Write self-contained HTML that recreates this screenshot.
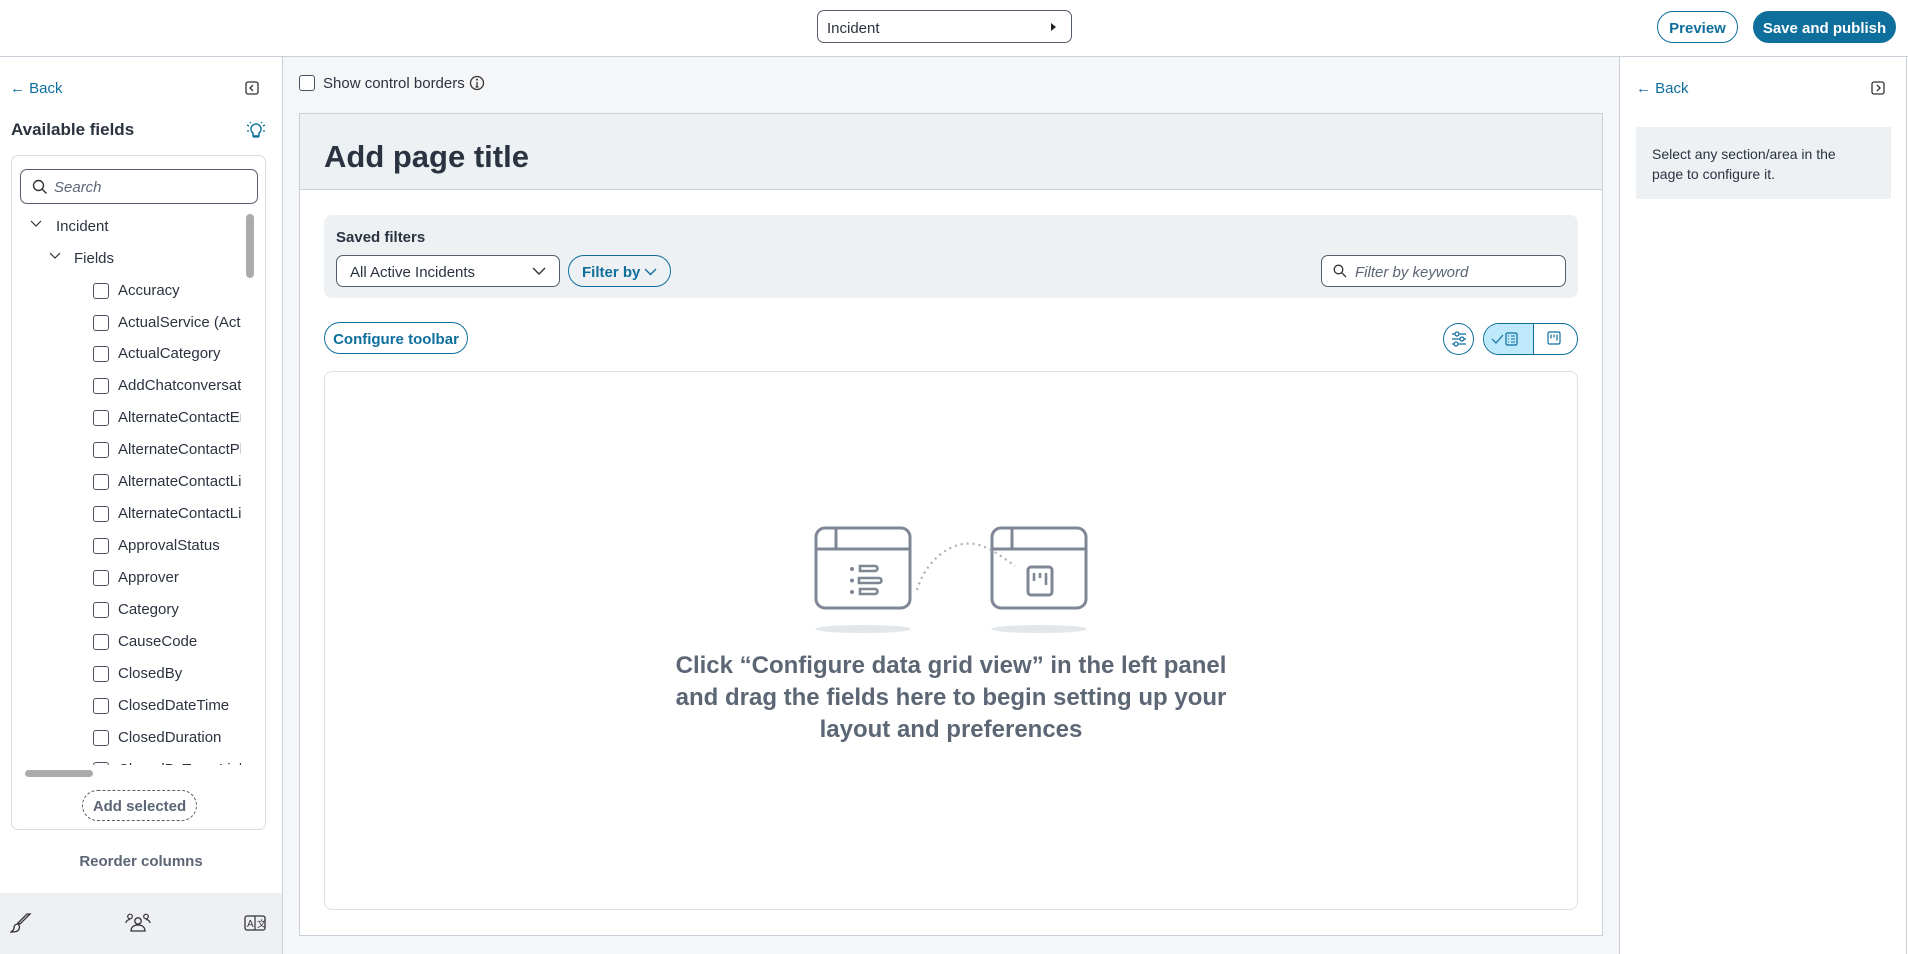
<!DOCTYPE html>
<html><head><meta charset="utf-8"><style>
*{box-sizing:border-box;margin:0;padding:0}
body{width:1908px;height:954px;overflow:hidden;background:#fff;font-family:"Liberation Sans",sans-serif;color:#2b3340;position:relative}
.a{position:absolute}
.blue{color:#0f6f9c}
.cb{position:absolute;width:16px;height:16px;border:1.5px solid #4a5362;border-radius:3px;background:#fff}
.item{position:absolute;left:0;width:240px;height:32px;font-size:15px;white-space:nowrap;overflow:hidden}
.item .cb{left:92px;top:8px}
.item span{position:absolute;left:117px;top:7px;width:123px;overflow:hidden}
.pill{position:absolute;border:1.3px solid #0f6f9c;border-radius:17px;color:#0f6f9c;font-weight:bold;font-size:15px;display:flex;align-items:center;justify-content:center;padding-top:2px}
</style></head><body>
<!-- top bar -->
<div class="a" style="left:0;top:56px;width:1908px;height:1px;background:#c9d0da"></div>
<div class="a" style="left:817px;top:10px;width:255px;height:33px;border:1.3px solid #555e6b;border-radius:7px;font-size:15px;padding:9px 9px">Incident</div>
<svg class="a" style="left:1050px;top:22px" width="8" height="10"><path d="M1 1L6 5L1 9Z" fill="#222"/></svg>
<div class="pill" style="left:1657px;top:11px;width:81px;height:32px">Preview</div>
<div class="pill" style="left:1753px;top:11px;width:143px;height:32px;background:#0f6f9c;color:#fff;border-color:#0f6f9c">Save and publish</div>

<!-- left panel -->
<div class="a" style="left:282px;top:57px;width:1px;height:897px;background:#c9d0da"></div>
<div class="a blue" style="left:10px;top:80px;font-size:15px">&#8592; Back</div>
<svg class="a" style="left:245px;top:81px" width="14" height="14"><rect x="1" y="1" width="12" height="12" rx="2" fill="none" stroke="#333" stroke-width="1.3"/><path d="M8 4L5 7L8 10" fill="none" stroke="#333" stroke-width="1.3"/></svg>
<div class="a" style="left:11px;top:120px;font-size:17px;font-weight:bold">Available fields</div>
<svg class="a" style="left:246px;top:121px" width="20" height="18"><path d="M10 3a5 5 0 0 1 3 9v3h-6v-3a5 5 0 0 1 3-9z" fill="none" stroke="#0f6f9c" stroke-width="1.5"/><path d="M7 16h6M1 4l2 1M19 4l-2 1M1 10h2M17 10h2M4 1l1 1M16 1l-1 1" stroke="#0f6f9c" stroke-width="1.3"/></svg>
<div class="a" style="left:11px;top:155px;width:255px;height:675px;border:1px solid #d8dde4;border-radius:7px;overflow:hidden">
 <div class="a" style="left:8px;top:13px;width:238px;height:35px;border:1.3px solid #555e6b;border-radius:7px;font-size:15px;font-style:italic;color:#5c6675;padding:9px 0 0 33px">Search</div>
 <svg class="a" style="left:20px;top:23px" width="16" height="16"><circle cx="6.5" cy="6.5" r="5" fill="none" stroke="#333" stroke-width="1.4"/><path d="M10 10L14.5 14.5" stroke="#333" stroke-width="1.4"/></svg>
 <div class="a" style="left:234px;top:58px;width:8px;height:64px;border-radius:4px;background:#ababab"></div>
 <svg class="a" style="left:18px;top:64px" width="12" height="8"><path d="M1 1L6 6L11 1" fill="none" stroke="#333" stroke-width="1.2"/></svg>
 <div class="a" style="left:44px;top:62px;font-size:15px">Incident</div>
 <svg class="a" style="left:37px;top:96px" width="12" height="8"><path d="M1 1L6 6L11 1" fill="none" stroke="#333" stroke-width="1.2"/></svg>
 <div class="a" style="left:62px;top:94px;font-size:15px">Fields</div>
 <div class="a" style="left:-11px;top:119px;width:250px;height:490px;overflow:hidden">
  <div class="item" style="top:0"><div class="cb"></div><span>Accuracy</span></div>
  <div class="item" style="top:32px"><div class="cb"></div><span>ActualService (ActualService)</span></div>
  <div class="item" style="top:63px"><div class="cb"></div><span>ActualCategory</span></div>
  <div class="item" style="top:95px"><div class="cb"></div><span>AddChatconversation</span></div>
  <div class="item" style="top:127px"><div class="cb"></div><span>AlternateContactEmail</span></div>
  <div class="item" style="top:159px"><div class="cb"></div><span>AlternateContactPhone</span></div>
  <div class="item" style="top:191px"><div class="cb"></div><span>AlternateContactLink</span></div>
  <div class="item" style="top:223px"><div class="cb"></div><span>AlternateContactLink</span></div>
  <div class="item" style="top:255px"><div class="cb"></div><span>ApprovalStatus</span></div>
  <div class="item" style="top:287px"><div class="cb"></div><span>Approver</span></div>
  <div class="item" style="top:319px"><div class="cb"></div><span>Category</span></div>
  <div class="item" style="top:351px"><div class="cb"></div><span>CauseCode</span></div>
  <div class="item" style="top:383px"><div class="cb"></div><span>ClosedBy</span></div>
  <div class="item" style="top:415px"><div class="cb"></div><span>ClosedDateTime</span></div>
  <div class="item" style="top:447px"><div class="cb"></div><span>ClosedDuration</span></div>
  <div class="item" style="top:479px"><div class="cb"></div><span>ClosedByTeamLinkCat</span></div>
 </div>
 <div class="a" style="left:13px;top:614px;width:68px;height:7px;border-radius:4px;background:#ababab"></div>
 <div class="a" style="left:70px;top:634px;width:115px;height:31px;border:1.2px dashed #555e6b;border-radius:16px;font-size:15px;font-weight:bold;color:#5c6675;display:flex;align-items:center;justify-content:center;padding-top:2px">Add selected</div>
</div>
<div class="a" style="left:0;top:853px;width:282px;text-align:center;font-size:15px;font-weight:bold;color:#5c6675">Reorder columns</div>
<div class="a" style="left:0;top:893px;width:282px;height:61px;background:#eef0f3"></div>
<svg class="a" style="left:10px;top:912px" width="22" height="22"><path d="M20 2L10 12l-2-1 9-9zM8 12c-3 0-4 2-4 4 0 2-2 3-3 4 3 0 7 0 8-3 1-2 0-4-1-5z" fill="none" stroke="#333" stroke-width="1.3"/></svg>
<svg class="a" style="left:125px;top:912px" width="26" height="22"><circle cx="13" cy="9" r="3.2" fill="none" stroke="#333" stroke-width="1.3"/><path d="M6 19c0-4 3-6 7-6s7 2 7 6z" fill="none" stroke="#333" stroke-width="1.3"/><circle cx="5" cy="4.5" r="2.3" fill="none" stroke="#333" stroke-width="1.2"/><circle cx="21" cy="4.5" r="2.3" fill="none" stroke="#333" stroke-width="1.2"/><path d="M1 11c0-2 2-3.5 4-3.5M25 11c0-2-2-3.5-4-3.5" fill="none" stroke="#333" stroke-width="1.2"/></svg>
<svg class="a" style="left:244px;top:915px" width="22" height="16"><rect x="1" y="1" width="20" height="14" rx="2" fill="none" stroke="#333" stroke-width="1.3"/><path d="M11 1v14" stroke="#333" stroke-width="1.2"/><text x="3" y="12" font-size="10" font-family="Liberation Sans" fill="#333">A</text><text x="13" y="12" font-size="9" font-family="Liberation Sans" fill="#333">文</text></svg>

<!-- center -->
<div class="a" style="left:283px;top:57px;width:1336px;height:897px;background:#f5f6f8"></div>
<div class="a" style="left:299px;top:75px;width:16px;height:16px;border:1.5px solid #4a5362;border-radius:3px;background:#fff"></div>
<div class="a" style="left:323px;top:75px;font-size:15px">Show control borders</div>
<svg class="a" style="left:469px;top:75px" width="16" height="16"><circle cx="8" cy="8" r="6.5" fill="none" stroke="#333" stroke-width="1.3"/><path d="M8 7v5M6.5 12h3" stroke="#333" stroke-width="1.3"/><circle cx="8" cy="4.6" r="1" fill="#333"/></svg>
<div class="a" style="left:299px;top:113px;width:1304px;height:823px;border:1px solid #c9d0da;background:#fff"></div>
<div class="a" style="left:300px;top:114px;width:1302px;height:76px;background:#eef1f4;border-bottom:1px solid #c9d0da"></div>
<div class="a" style="left:324px;top:139px;font-size:31px;font-weight:bold;color:#2b3340">Add page title</div>
<div class="a" style="left:324px;top:215px;width:1254px;height:83px;background:#eef1f4;border-radius:8px"></div>
<div class="a" style="left:336px;top:229px;font-size:15px;font-weight:bold">Saved filters</div>
<div class="a" style="left:336px;top:255px;width:224px;height:32px;border:1.3px solid #555e6b;border-radius:7px;background:#fff;font-size:15px;padding:8px 13px">All Active Incidents</div>
<svg class="a" style="left:532px;top:267px" width="14" height="9"><path d="M1 1L7 7L13 1" fill="none" stroke="#333" stroke-width="1.4"/></svg>
<div class="pill" style="left:568px;top:255px;width:103px;height:32px;justify-content:flex-start;padding-left:13px">Filter by</div>
<svg class="a" style="left:644px;top:268px" width="13" height="8"><path d="M1 1L6.5 6.5L12 1" fill="none" stroke="#0f6f9c" stroke-width="1.4"/></svg>
<div class="a" style="left:1321px;top:255px;width:245px;height:32px;border:1.3px solid #555e6b;border-radius:7px;background:#fff;font-size:15px;font-style:italic;color:#5c6675;padding:8px 0 0 33px">Filter by keyword</div>
<svg class="a" style="left:1333px;top:264px" width="14" height="14"><circle cx="5.5" cy="5.5" r="4.3" fill="none" stroke="#333" stroke-width="1.3"/><path d="M8.7 8.7L13 13" stroke="#333" stroke-width="1.3"/></svg>
<div class="pill" style="left:324px;top:322px;width:144px;height:32px">Configure toolbar</div>
<div class="a" style="left:1443px;top:323px;width:31px;height:32px;border:1.3px solid #0f6f9c;border-radius:50%"></div>
<svg class="a" style="left:1450px;top:330px" width="18" height="18"><path d="M2 4h14M2 9h14M2 14h14" stroke="#0f6f9c" stroke-width="1.2"/><circle cx="7" cy="4" r="2" fill="#fff" stroke="#0f6f9c" stroke-width="1.2"/><circle cx="12" cy="9" r="2" fill="#fff" stroke="#0f6f9c" stroke-width="1.2"/><circle cx="6" cy="14" r="2" fill="#fff" stroke="#0f6f9c" stroke-width="1.2"/></svg>
<div class="a" style="left:1483px;top:323px;width:95px;height:32px;border:1.3px solid #0f6f9c;border-radius:16px;overflow:hidden">
 <div class="a" style="left:0;top:0;width:50px;height:30px;background:#bde9fb;border-right:1.3px solid #0f6f9c"></div>
</div>
<svg class="a" style="left:1491px;top:331px" width="34" height="16"><path d="M1 8l4 4 7-8" fill="none" stroke="#0f6f9c" stroke-width="1.2"/><rect x="15" y="2" width="11" height="12" rx="1.5" fill="none" stroke="#0f6f9c" stroke-width="1.2"/><path d="M17 5h1M20 5h4M17 8h1M20 8h4M17 11h1M20 11h4" stroke="#0f6f9c" stroke-width="1"/></svg>
<svg class="a" style="left:1547px;top:331px" width="14" height="14"><rect x="1" y="1" width="12" height="12" rx="1.5" fill="none" stroke="#0f6f9c" stroke-width="1.2"/><path d="M4 3.5v4M7 3.5v3M10 3.5v6" stroke="#0f6f9c" stroke-width="1.2"/></svg>
<div class="a" style="left:324px;top:371px;width:1254px;height:539px;border:1px solid #dde1e6;border-radius:8px"></div>
<!-- illustration -->
<svg class="a" style="left:810px;top:522px" width="282" height="115" viewBox="0 0 282 115">
 <ellipse cx="53" cy="107" rx="48" ry="4" fill="#e3e6ea"/>
 <ellipse cx="229" cy="107" rx="48" ry="4" fill="#e3e6ea"/>
 <rect x="6" y="6" width="94" height="80" rx="9" fill="none" stroke="#7f8794" stroke-width="3"/>
 <path d="M6 27h94M26 6v21" stroke="#7f8794" stroke-width="3"/>
 <rect x="182" y="6" width="94" height="80" rx="9" fill="none" stroke="#7f8794" stroke-width="3"/>
 <path d="M182 27h94M202 6v21" stroke="#7f8794" stroke-width="3"/>
 <g fill="none" stroke="#7f8794" stroke-width="2.6"><path d="M50 44h15a2.5 2.5 0 0 1 0 5h-15z M49 56h20a2.5 2.5 0 0 1 0 5h-20z M50 67h15a2.5 2.5 0 0 1 0 5h-15z"/></g>
 <g fill="#7f8794"><circle cx="42" cy="47" r="2"/><circle cx="42" cy="58.5" r="2"/><circle cx="42" cy="70" r="2"/></g>
 <rect x="218" y="45" width="24" height="28" rx="3" fill="none" stroke="#7f8794" stroke-width="3"/>
 <path d="M224 51v8M230 51v5M236 51v12" stroke="#7f8794" stroke-width="2.6"/>
 <path d="M107 68C115 40 140 18 165 22C180 25 192 35 205 44" fill="none" stroke="#a9b0ba" stroke-width="2.2" stroke-dasharray="2 4"/>
</svg>
<div class="a" style="left:324px;top:650px;width:1254px;text-align:center;font-size:24px;font-weight:bold;color:#5c6675;line-height:32px">Click “Configure data grid view” in the left panel<br>and drag the fields here to begin setting up your<br>layout and preferences</div>

<!-- right panel -->
<div class="a" style="left:1619px;top:57px;width:1px;height:897px;background:#c9d0da"></div>
<div class="a" style="left:1906px;top:57px;width:1px;height:897px;background:#c9d0da"></div>
<div class="a blue" style="left:1636px;top:80px;font-size:15px">&#8592; Back</div>
<svg class="a" style="left:1871px;top:81px" width="14" height="14"><rect x="1" y="1" width="12" height="12" rx="2" fill="none" stroke="#333" stroke-width="1.3"/><path d="M6 4L9 7L6 10" fill="none" stroke="#333" stroke-width="1.3"/></svg>
<div class="a" style="left:1636px;top:127px;width:255px;height:72px;background:#eef1f4;font-size:14px;line-height:20px;padding:17px 30px 17px 16px;color:#2b3340">Select any section/area in the page to configure it.</div>
</body></html>
